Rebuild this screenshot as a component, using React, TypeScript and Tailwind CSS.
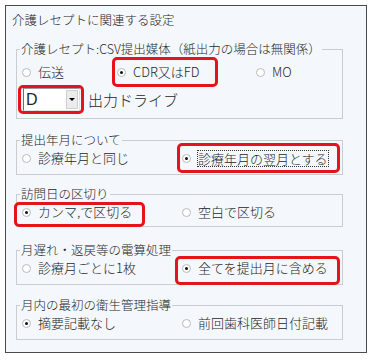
import React from 'react';

const Radio: React.FC<{ checked?: boolean }> = ({ checked }) => (
  <span className="flex h-[9px] w-[9px] shrink-0 items-center justify-center rounded-full border border-[#b9b9b9] bg-white">
    {checked && <span className="h-[3px] w-[3px] rounded-full bg-[#111]" />}
  </span>
);

// red annotation frame drawn over an option
const RedMark: React.FC<{ className: string }> = ({ className }) => (
  <span className={`pointer-events-none absolute rounded-[5px] border-[3px] border-[#e5141c] ${className}`} />
);

const Option: React.FC<{
  label: string;
  checked?: boolean;
  focused?: boolean;
  mark?: string;
  className?: string;
}> = ({ label, checked, focused, mark, className = '' }) => (
  <label className={`relative flex h-[20px] items-center gap-[7px] ${className}`}>
    <Radio checked={checked} />
    <span className={focused ? 'outline-1 outline-dotted outline-[#333] leading-[15px]' : ''}>{label}</span>
    {mark && <RedMark className={mark} />}
  </label>
);

const Group: React.FC<{ title: string; className?: string; children: React.ReactNode }> = ({
  title,
  className = '',
  children,
}) => (
  <fieldset className={`ml-[10px] mr-[23px] border border-[#c9cdd0] pl-[3px] ${className}`}>
    <legend className="px-[1px] text-[12.5px] leading-[16px]">{title}</legend>
    {children}
  </fieldset>
);

const App: React.FC = () => {
  return (
    <div className="h-[360px] w-[375px] bg-white pl-[5px] pt-[5px] font-['Noto_Sans_CJK_JP_Light','Noto_Sans_CJK_JP',sans-serif] text-[13px] font-light text-[#262626]">
      <div className="h-[348px] w-[362px] border border-[#4a4a4a] bg-[#f4f8fc] pt-[6px]">
        <div className="pl-[6px] text-[12.5px] leading-[16px]">介護レセプトに関連する設定</div>

        {/* 提出媒体 */}
        <Group title="介護レセプト:CSV提出媒体（紙出力の場合は無関係）" className="mt-[13px] h-[78px]">
          <div className="mt-[5px] flex pl-[2px]">
            <Option label="伝送" className="w-[95px]" />
            <Option
              label="CDR又はFD"
              checked
              className="w-[139px]"
              mark="left-[-5px] top-[-5px] h-[30px] w-[106px]"
            />
            <Option label="MO" />
          </div>
          <div className="mt-[6px] flex items-center gap-[8px] pl-[3px]">
            <div className="relative flex h-[23px] w-[57px] items-center border border-[#e2e2e2] border-l-[#6f6f6f] border-t-[#9a9a9a] bg-white">
              <span className="flex-1 pl-[2px] font-['Liberation_Sans',sans-serif] text-[16px] font-normal leading-[20px]">D</span>
              <span className="mr-[1px] flex h-[19px] w-[12px] items-center justify-center border border-[#cfcfcf] bg-[#ececec]">
                <span className="h-0 w-0 border-x-[3px] border-t-[3px] border-x-transparent border-t-black" />
              </span>
              <RedMark className="left-[-6px] top-[-4px] h-[29px] w-[66px]" />
            </div>
            <span className="text-[15px] leading-[20px]">出力ドライブ</span>
          </div>
        </Group>

        <Group title="提出年月について" className="mt-[13px] h-[43px]">
          <div className="flex pl-[2px]">
            <Option label="診療年月と同じ" className="w-[160px]" />
            <Option
              label="診療年月の翌月とする"
              checked
              focused
              mark="left-[-5px] top-[-5px] h-[30px] w-[163px]"
            />
          </div>
        </Group>

        <Group title="訪問日の区切り" className="mt-[11px] h-[41px]">
          <div className="flex pl-[2px]">
            <Option
              label="カンマ,で区切る"
              checked
              className="w-[160px]"
              mark="left-[-8px] top-[0px] h-[25px] w-[131px]"
            />
            <Option label="空白で区切る" />
          </div>
        </Group>

        <Group title="月遅れ・返戻等の電算処理" className="mt-[15px] h-[43px]">
          <div className="flex pl-[2px]">
            <Option label="診療月ごとに1枚" className="w-[160px]" />
            <Option
              label="全てを提出月に含める"
              checked
              mark="left-[-7px] top-[-2px] h-[29px] w-[165px]"
            />
          </div>
        </Group>

        <Group title="月内の最初の衛生管理指導" className="mt-[12px] h-[43px]">
          <div className="flex pl-[2px]">
            <Option label="摘要記載なし" checked className="w-[160px]" />
            <Option label="前回歯科医師日付記載" />
          </div>
        </Group>
      </div>
    </div>
  );
};

export default App;
